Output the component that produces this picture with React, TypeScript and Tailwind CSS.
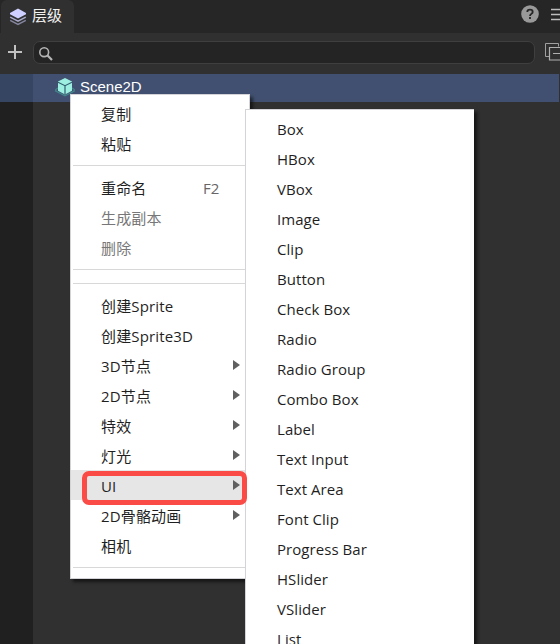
import React from "react";

type Item = { label: string; shortcut?: string; disabled?: boolean; arrow?: boolean; active?: boolean };

const editItems: Item[] = [{ label: "复制" }, { label: "粘贴" }];
const nodeItems: Item[] = [
  { label: "重命名", shortcut: "F2" },
  { label: "生成副本", disabled: true },
  { label: "删除", disabled: true },
];
const createItems: Item[] = [
  { label: "创建Sprite" },
  { label: "创建Sprite3D" },
  { label: "3D节点", arrow: true },
  { label: "2D节点", arrow: true },
  { label: "特效", arrow: true },
  { label: "灯光", arrow: true },
  { label: "UI", arrow: true, active: true },
  { label: "2D骨骼动画", arrow: true },
  { label: "相机" },
];
const uiItems = [
  "Box", "HBox", "VBox", "Image", "Clip", "Button", "Check Box", "Radio", "Radio Group",
  "Combo Box", "Label", "Text Input", "Text Area", "Font Clip", "Progress Bar", "HSlider",
  "VSlider", "List",
];

function MenuRow({ item }: { item: Item }) {
  return (
    <div className={`flex h-[30px] shrink-0 items-center pl-[30px] ${item.active ? "bg-[#e6e6e6]" : ""} ${item.disabled ? "text-[#777777]" : "text-[#1f1f1f]"}`}>
      <span className="mt-[2px] w-[101px] whitespace-nowrap tracking-[0.15px]">{item.label}</span>
      {item.shortcut && <span className="ml-px mt-[2px] text-[#666666]">{item.shortcut}</span>}
      {item.arrow && (
        <svg className="ml-[31px]" width="8" height="10" viewBox="0 0 8 10">
          <path d="M0 0 7 5 0 10Z" fill="#606060" />
        </svg>
      )}
    </div>
  );
}

function MenuGroup({ items }: { items: Item[] }) {
  return <>{items.map((item) => <MenuRow key={item.label} item={item} />)}</>;
}

function Separator() {
  return <div className="ml-[2px] h-px shrink-0 bg-[#d8d8d8]" />;
}

function LayersIcon() {
  return (
    <svg width="18" height="18" viewBox="0 0 18 18">
      <path d="m1.2 12.3 7.8 4.1 7.8-4.1" fill="none" stroke="#85869f" strokeWidth="1.4" />
      <path d="m1.2 9.1 7.8 4.1 7.8-4.1" fill="none" stroke="#a9aaca" strokeWidth="1.4" />
      <path d="M9 .5 17 5v1.2l-8 4.4-8-4.4V5Z" fill="#cfd0ff" />
    </svg>
  );
}

function CubeIcon() {
  return (
    <svg className="-mt-[2px]" width="20" height="20" viewBox="0 0 20 20">
      <path d="M3 11 .8 12.5v1.7L10 18.8l9.2-4.6v-1.7L17 11" fill="none" stroke="#42858a" strokeWidth="1.3" />
      <path d="m10 1 7 3.5v9.3l-7 3.8-7-3.8V4.5Z" fill="#9df0e1" />
      <path d="m3 5.2 7 3.5 7-3.5M10 8.7v8.5" fill="none" stroke="#315f70" strokeWidth="1.2" />
    </svg>
  );
}

export default function App() {
  return (
    <div className="relative flex h-[644px] w-[560px] flex-col overflow-hidden bg-[#303030] font-['Open_Sans','Noto_Sans_CJK_SC',sans-serif] text-[15px]">
      <header className="flex h-[33px] shrink-0 bg-[#262626]">
        <div className="ml-px flex w-[73px] items-center rounded-t-[6px] bg-[#303030] pl-2">
          <LayersIcon />
          <span className="-mt-[3px] ml-[5px] whitespace-nowrap text-[15px] leading-5 text-[#f3f3f3]">层级</span>
        </div>
        <div className="flex flex-1 items-start justify-end">
          <svg className="mt-[5px]" width="18" height="18" viewBox="0 0 18 18">
            <circle cx="9" cy="9" r="8.8" fill="#999" />
            <path d="M6.3 7c0-3.2 5.4-3.1 5.4-.1 0 2-2.7 2-2.7 4M9 12v2" fill="none" stroke="#262626" strokeWidth="1.8" />
          </svg>
          <svg className="ml-[11px] mt-2" width="10" height="13" viewBox="0 0 10 13">
            <path d="M1 1.5h9M1 6.5h9M1 11.5h9" stroke="#bdbdbd" strokeWidth="1.3" />
          </svg>
        </div>
      </header>

      <div className="flex h-[41px] shrink-0 items-start">
        <svg className="ml-2 mt-3 shrink-0" width="14" height="14" viewBox="0 0 14 14">
          <path d="M0 7h14M7 0v14" stroke="#c2c2c2" strokeWidth="2" />
        </svg>
        <div className="ml-[11px] mt-2 h-[23px] w-[502px] shrink-0 rounded-[7px] border border-[#3f3f3f] bg-[#242424]">
          <svg className="ml-[5px] mt-[5px]" width="14" height="14" viewBox="0 0 14 14">
            <circle cx="5.2" cy="5.2" r="4.4" fill="none" stroke="#b5b5b5" strokeWidth="1.6" />
            <path d="m8.3 8.3 4.7 4.7" stroke="#b5b5b5" strokeWidth="2.2" />
          </svg>
        </div>
        <svg className="ml-[10px] mt-[10px] shrink-0" width="18" height="18" viewBox="0 0 18 18">
          <path d="M4 13.5H.5V.5h13v3" fill="none" stroke="#a0a0a0" />
          <path d="M4.5 4.5h13v12.5h-13ZM8 10.5h7" fill="none" stroke="#b0b0b0" strokeWidth="1.2" />
        </svg>
      </div>

      <main className="flex min-h-0 flex-1">
        <div className="w-[33px] shrink-0 bg-[#202020]">
          <div className="h-7 bg-[#354562]" />
        </div>
        <div className="flex-1">
          <div className="mr-px flex h-7 items-center bg-[#415070] pl-[22px]">
            <CubeIcon />
            <span className="ml-[5px] mt-[-2px] font-['Liberation_Sans',sans-serif] text-[15px] leading-5 text-white">Scene2D</span>
          </div>
        </div>
      </main>

      <div className="absolute left-[70px] top-[94px] flex h-[485px] w-[180px] flex-col border border-[#d4d4d8] bg-white pt-[3px] shadow-[3px_3px_3px_rgba(0,0,0,0.55)]">
        <MenuGroup items={editItems} />
        <div className="h-[7px] shrink-0" />
        <Separator />
        <div className="h-[6px] shrink-0" />
        <MenuGroup items={nodeItems} />
        <div className="h-[7px] shrink-0" />
        <Separator />
        <div className="h-[13px] shrink-0" />
        <Separator />
        <div className="h-[6px] shrink-0" />
        <MenuGroup items={createItems} />
        <div className="h-[7px] shrink-0" />
        <Separator />
      </div>

      <div className="absolute left-[245px] top-[109px] flex h-[560px] w-[229px] flex-col border-l border-t border-[#d4d4d8] bg-white pl-[31px] pt-[4px] tracking-[0.06px] text-[#1f1f1f] shadow-[3px_3px_3px_rgba(0,0,0,0.55)]">
        {uiItems.map((label) => (
          <div key={label} className="flex h-[30px] shrink-0 items-center whitespace-nowrap">{label}</div>
        ))}
      </div>

      <div className="absolute left-[82px] top-[471px] h-[34px] w-[165px] rounded-[7px] border-[5px] border-[#fa4b46]" />
    </div>
  );
}
